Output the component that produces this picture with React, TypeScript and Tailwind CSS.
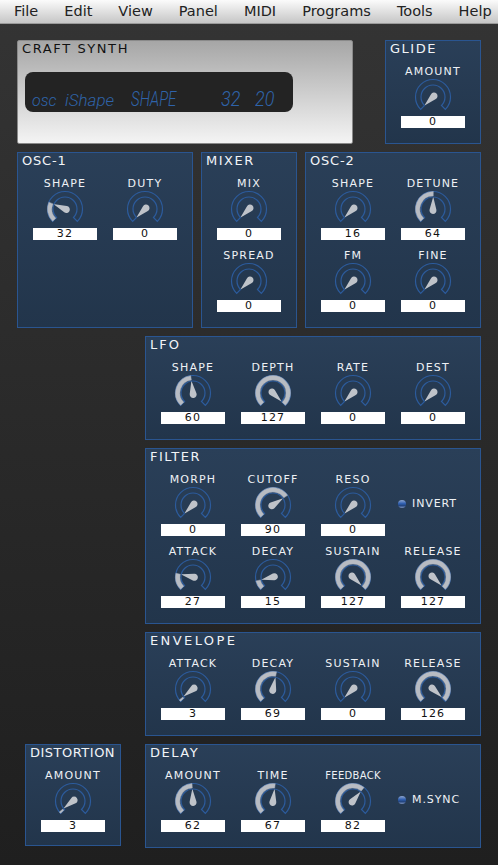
import type { ReactNode } from 'react'

const menus = ['File', 'Edit', 'View', 'Panel', 'MIDI', 'Programs', 'Tools', 'Help']

/* =========================
   KNOB GEOMETRY
========================= */
function polar(r: number, deg: number) {
    const a = ((deg - 90) * Math.PI) / 180
    return [19 + r * Math.cos(a), 19 + r * Math.sin(a)]
}

function band(from: number, to: number, inner: number, outer: number) {
    const [ax, ay] = polar(outer, from)
    const [bx, by] = polar(outer, to)
    const [cx, cy] = polar(inner, to)
    const [dx, dy] = polar(inner, from)
    const large = to - from > 180 ? 1 : 0
    return `M${ax} ${ay}A${outer} ${outer} 0 ${large} 1 ${bx} ${by}L${cx} ${cy}A${inner} ${inner} 0 ${large} 0 ${dx} ${dy}Z`
}

function Knob({ value }: { value: number }) {
    const angle = -135 + (270 * value) / 127
    return (
        <svg width="38" height="38" viewBox="0 0 38 38" className="block">
            <path d={band(-135, 135, 12, 17.5)} fill="none" stroke="#2c5b9c" strokeWidth="1.2" />
            {value > 0 && <path d={band(-135, angle, 13, 17.5)} fill="#b8bcc3" stroke="#a3adbd" strokeWidth="0.5" />}
            <g transform={`rotate(${angle} 19 19)`}>
                <path d="M15.6 19.6A3.5 3.5 0 1 0 22.4 19.6L19.2 7.5H18.8Z" fill="#bfc3c9" />
            </g>
        </svg>
    )
}

type ControlProps = {
    label: string
    value: number
    position?: number
    labelClass?: string
}

function Control({ label, value, position, labelClass = 'text-[11px] tracking-[1.2px]' }: ControlProps) {
    return (
        <div className="flex w-16 flex-col items-center">
            <div className={`h-[14px] whitespace-nowrap pt-[1px] leading-[14px] text-[#eef1f5] ${labelClass}`}>{label}</div>
            <Knob value={position ?? value} />
            <div className="h-3 w-16 bg-white text-center text-[11px] leading-3 tracking-[1.2px] text-[#111]">{value}</div>
        </div>
    )
}

function Led({ label }: { label: string }) {
    return (
        <div className="-ml-[3px] flex h-16 w-[67px] items-center gap-[6px]">
            <span className="h-2 w-2 shrink-0 rounded-full bg-[linear-gradient(#8fa6d0,#2f5fb0_45%,#23457f_70%,#7d93bd)]" />
            <span className="whitespace-nowrap text-[11px] tracking-[0.9px] text-[#eef1f5]">{label}</span>
        </div>
    )
}

function Panel({ title, className, titleClass = 'tracking-[1.5px]', children }: { title: string; className: string; titleClass?: string; children: ReactNode }) {
    return (
        <section className={`shrink-0 border border-[#2a5590] bg-[linear-gradient(#2a3f58,#22354b)] px-[15px] ${className}`}>
            <h2 className={`-ml-[11px] h-[23px] whitespace-nowrap text-[13px] leading-[16px] text-[#f2f4f7] ${titleClass}`}>{title}</h2>
            {children}
        </section>
    )
}

function Row({ children }: { children: ReactNode }) {
    return <div className="flex gap-4">{children}</div>
}

export default function App() {
    return (
        <div className="flex h-[865px] w-[498px] flex-col overflow-hidden bg-[linear-gradient(#343434,#1f1f1f)] font-['DejaVu_Sans',sans-serif]">

            {/* MENU */}
            <nav className="flex h-[24px] shrink-0 items-center border-b border-[#9a9a9a] bg-[linear-gradient(#fbfbfb,#c6c6c6)] pl-[1px] text-[14.5px] text-[#222]">
                {menus.map((menu) => (
                    <span key={menu} className="px-[13px]">{menu}</span>
                ))}
            </nav>

            <main className="flex flex-col gap-2 pt-4 pr-[17px]">

                {/* DISPLAY + GLIDE */}
                <div className="flex justify-between pl-[17px]">
                    <section className="h-[104px] w-[336px] rounded-[2px] border border-[#8a8a8a] bg-[linear-gradient(#a6a6a6,#f4f4f4)] px-[7px] pt-[1px]">
                        <h1 className="-ml-[3px] h-[30px] whitespace-nowrap text-[13px] leading-[14px] tracking-[1.6px] text-[#111]">CRAFT SYNTH</h1>
                        <div className="flex h-10 w-[268px] items-end rounded-lg bg-[#232323] pb-[3px] pl-[7px] font-['Roboto',sans-serif] leading-none font-light text-[#2f63aa] italic">
                            <span className="w-[33px] text-[16px]">osc</span>
                            <span className="w-[66px] text-[17px]">iShape</span>
                            <span className="w-[90px] origin-left scale-x-75 text-[20px]">SHAPE</span>
                            <span className="w-[34px] origin-left scale-x-90 text-[20px]">32</span>
                            <span className="origin-left scale-x-90 text-[20px]">20</span>
                        </div>
                    </section>
                    <Panel title="GLIDE" className="h-[104px] w-24">
                        <Control label="AMOUNT" value={0} />
                    </Panel>
                </div>

                {/* OSCILLATORS */}
                <div className="flex gap-2 pl-[17px]">
                    <Panel title="OSC-1" className="h-[176px] w-[176px]" titleClass="tracking-[0.8px]">
                        <Row>
                            <Control label="SHAPE" value={32} />
                            <Control label="DUTY" value={0} />
                        </Row>
                    </Panel>
                    <Panel title="MIXER" className="flex h-[176px] w-24 flex-col">
                        <div className="flex flex-col gap-2">
                            <Control label="MIX" value={0} />
                            <Control label="SPREAD" value={0} />
                        </div>
                    </Panel>
                    <Panel title="OSC-2" className="h-[176px] w-[176px]" titleClass="tracking-[0.8px]">
                        <div className="flex flex-col gap-2">
                            <Row>
                                {/* the knob sits at its minimum although the box reads 16 */}
                                <Control label="SHAPE" value={16} position={0} />
                                <Control label="DETUNE" value={64} />
                            </Row>
                            <Row>
                                <Control label="FM" value={0} />
                                <Control label="FINE" value={0} />
                            </Row>
                        </div>
                    </Panel>
                </div>

                {/* LFO */}
                <div className="flex justify-end">
                    <Panel title="LFO" className="w-[336px] pb-[15px]" titleClass="tracking-[2px]">
                        <Row>
                            <Control label="SHAPE" value={60} />
                            <Control label="DEPTH" value={127} />
                            <Control label="RATE" value={0} />
                            <Control label="DEST" value={0} />
                        </Row>
                    </Panel>
                </div>

                {/* FILTER */}
                <div className="flex justify-end">
                    <Panel title="FILTER" className="w-[336px] pb-[15px]">
                        <div className="flex flex-col gap-2">
                            <Row>
                                <Control label="MORPH" value={0} />
                                <Control label="CUTOFF" value={90} />
                                <Control label="RESO" value={0} />
                                <Led label="INVERT" />
                            </Row>
                            <Row>
                                <Control label="ATTACK" value={27} />
                                <Control label="DECAY" value={15} />
                                <Control label="SUSTAIN" value={127} />
                                <Control label="RELEASE" value={127} />
                            </Row>
                        </div>
                    </Panel>
                </div>

                {/* ENVELOPE */}
                <div className="flex justify-end">
                    <Panel title="ENVELOPE" className="w-[336px] pb-[15px]" titleClass="tracking-[2.4px]">
                        <Row>
                            <Control label="ATTACK" value={3} />
                            <Control label="DECAY" value={69} />
                            <Control label="SUSTAIN" value={0} />
                            <Control label="RELEASE" value={126} />
                        </Row>
                    </Panel>
                </div>

                {/* DISTORTION + DELAY */}
                <div className="flex items-start justify-between pl-[25px]">
                    <Panel title="DISTORTION" className="h-[102px] w-24" titleClass="tracking-[0.5px]">
                        <Control label="AMOUNT" value={3} />
                    </Panel>
                    <Panel title="DELAY" className="w-[336px] pb-[15px]">
                        <Row>
                            <Control label="AMOUNT" value={62} />
                            <Control label="TIME" value={67} />
                            <Control label="FEEDBACK" value={82} labelClass="text-[10px] tracking-[0.3px]" />
                            <Led label="M.SYNC" />
                        </Row>
                    </Panel>
                </div>
            </main>
        </div>
    )
}
